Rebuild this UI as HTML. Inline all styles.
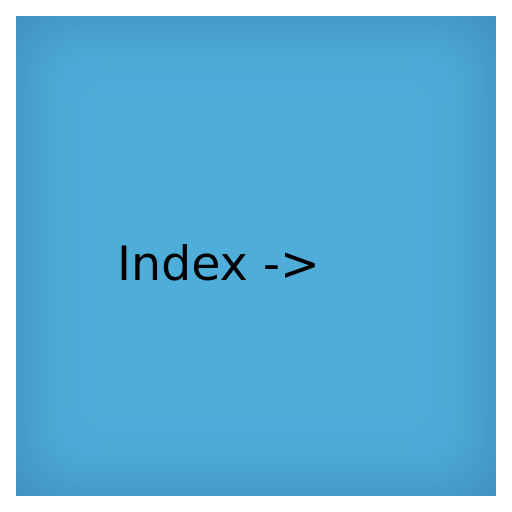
<!DOCTYPE html>
<html><head><style>
html,body{margin:0;padding:0;background:#fff;width:512px;height:512px;overflow:hidden}
.b{position:absolute;left:16px;top:16px;width:480px;height:480px;background:#4fadda;box-shadow:inset 0 0 70px rgba(30,70,110,0.35)}
.t{position:absolute;left:117px;top:237px;font:47.5px "DejaVu Sans",sans-serif;color:#000;white-space:nowrap;line-height:56px}
</style></head><body>
<div class="b"></div>
<div class="t">Index -&gt;</div>
</body></html>
